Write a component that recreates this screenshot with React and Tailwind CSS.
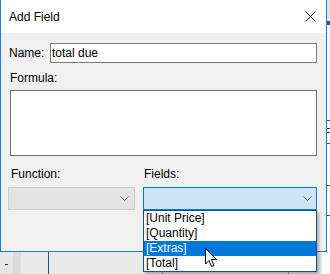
import React from "react";

const font = { fontFamily: '"Liberation Sans", Arial, sans-serif' };

const Chevron = () => (
  <svg width="9" height="5" viewBox="0 0 9 5" className="block">
    <path d="M0.5 0.5 L4.5 4.5 L8.5 0.5" fill="none" stroke="#606060" strokeWidth="1" />
  </svg>
);

const Cursor = () => (
  <svg width="13" height="20" viewBox="0 0 13 20" className="block">
    <path
      d="M0.5 0.5 L0.5 16 L4 12.5 L6.5 18.5 L9 17.5 L6.5 11.5 L11.5 11.5 Z"
      fill="#ffffff"
      stroke="#000000"
      strokeWidth="1"
      strokeLinejoin="miter"
    />
  </svg>
);

const fields = ["[Unit Price]", "[Quantity]", "[Extras]", "[Total]"];

export default function App() {
  const selected = "[Extras]";

  return (
    <div className="relative w-[330px] h-[274px] overflow-hidden bg-[#ededed] text-[12px] text-black" style={font}>
      {/* app behind the dialog */}
      <div className="flex w-full h-full">
        <div className="w-[13px] flex flex-col justify-end items-center pb-[9px] bg-gradient-to-b from-[#f4f4f4] to-[#e6e6e6]">
          <div className="w-[3px] h-[1px] bg-[#333]" />
        </div>
        <div className="w-[8px] bg-[#dadada]" />
        <div className="w-[28px] bg-gradient-to-b from-[#f4f4f4] to-[#e8e8e8] border-r border-[#2d4f7c]" />
        <div className="w-[115px] bg-gradient-to-b from-[#f4f4f4] to-[#e8e8e8] border-r border-[#8a9bb3]" />
        <div className="w-[128px] bg-gradient-to-b from-[#f4f4f4] to-[#e8e8e8] border-r border-[#8a9bb3]" />
        <div className="w-[33px] bg-gradient-to-b from-[#f4f4f4] to-[#e8e8e8]" />
        <div className="flex-1 flex flex-col bg-[#f2f2f2]">
          <div className="h-[21px] bg-[#e4e4e4]" />
          <div className="h-[4px] bg-[#34557f]" />
          <div className="h-[96px] bg-[#f5f5f5] border-b border-[#2f5b93]" />
          <div className="h-[23px] bg-white border-b border-[#2f5b93] flex items-center text-[13px] leading-none">F</div>
          <div className="h-[42px] bg-white border-b border-[#2f5b93] pt-[9px]">
            <div className="w-[3px] h-[14px] bg-[#888]" />
          </div>
          <div className="h-[30px] bg-white border-b border-[#2f5b93]" />
          <div className="flex-1 bg-white" />
        </div>
      </div>

      {/* dialog */}
      <div className="absolute left-0 top-0 w-[327px] h-[252px] flex flex-col border-l border-r border-b border-[#1c7fd6] bg-[#f0f0f0]">
        <div className="h-[33px] bg-white flex items-center justify-between pl-[8px] pr-[10px]">
          <span className="text-[12px] leading-none pt-[1px]">Add Field</span>
          <svg width="11" height="11" viewBox="0 0 11 11" className="block">
            <path d="M0.5 0.5 L10.5 10.5 M10.5 0.5 L0.5 10.5" stroke="#000" strokeWidth="1" />
          </svg>
        </div>

        <div className="flex-1 flex flex-col">
          {/* name */}
          <div className="flex items-center mt-[10px] pl-[8px]">
            <span className="w-[41px] leading-[15px]">Name:</span>
            <div className="w-[267px] h-[20px] bg-white border border-[#7a7a7a] flex items-center pl-[1px] leading-none">
              total due
            </div>
          </div>

          {/* formula */}
          <div className="mt-[8px] pl-[9px] leading-[15px]">Formula:</div>
          <div className="mt-[4px] ml-[9px] w-[307px] h-[66px] bg-white border border-[#6e6e6e]" />

          {/* function / fields */}
          <div className="flex mt-[11px] ml-[7px] gap-[8px]">
            <div className="w-[127px] flex flex-col">
              <span className="pl-[3px] leading-[15px]">Function:</span>
              <div className="mt-[5px] h-[23px] bg-[#e3e3e3] border border-[#cccccc] flex items-center justify-end pr-[5px]">
                <Chevron />
              </div>
            </div>
            <div className="relative w-[174px] flex flex-col">
              <span className="pl-[1px] leading-[15px]">Fields:</span>
              <div className="mt-[5px] h-[23px] bg-[#cce4f7] border border-[#0078d7] flex items-center justify-end pr-[4px]">
                <Chevron />
              </div>

              {/* open list */}
              <div className="absolute left-0 top-[43px] w-[174px] bg-white border border-[#1b4f8f] shadow-[2px_2px_3px_rgba(0,0,0,0.3)]">
                {fields.map((f) => (
                  <div
                    key={f}
                    className={
                      f === selected
                        ? "h-[15px] leading-[15px] pl-[2px] bg-[#0078d7] text-white"
                        : "h-[15px] leading-[15px] pl-[2px]"
                    }
                  >
                    {f}
                  </div>
                ))}
                <div className="absolute left-[61px] top-[37px]">
                  <Cursor />
                </div>
              </div>
            </div>
          </div>
        </div>
      </div>
    </div>
  );
}
